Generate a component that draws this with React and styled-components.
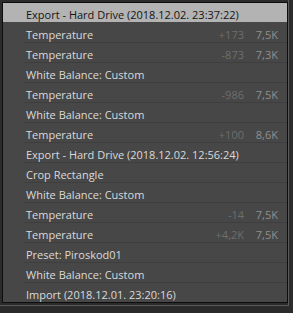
import styled, { createGlobalStyle } from "styled-components"

const Global = createGlobalStyle`
  html, body {
    margin: 0;
    padding: 0;
    background: #2b2b2b;
  }
`

const Frame = styled.div`
  width: 286px;
  height: 303px;
  padding: 2px 0 0 2px;
  border-right: 1px solid #5a5a5a;
  border-bottom: 1px solid #5a5a5a;
`

const Panel = styled.div`
  width: 284px;
  border: 1px solid #0d0d0d;
  background: #474747;
  font-family: "Open Sans", "Noto Sans", sans-serif;
  font-size: 11px;
`

const Row = styled.div`
  display: flex;
  align-items: center;
  height: 19px;
  box-sizing: border-box;
  padding: 4px 9px 0 23px;
  background: ${p => (p.$active ? "#b3b3b3" : "transparent")};
  color: ${p => (p.$active ? "#141414" : "#dadada")};
`

const Sep = styled.div`
  height: 1px;
  margin-left: 20px;
  background: ${p => (p.$hidden ? "transparent" : "#3e3e3e")};
`

const Label = styled.span`
  flex: 1;
  white-space: nowrap;
`

const Delta = styled.span`
  color: #6e6e6e;
  width: 40px;
  text-align: right;
`

const Value = styled.span`
  color: #8f8f8f;
  width: 34px;
  text-align: right;
`

const steps = [
  { label: "Export - Hard Drive (2018.12.02. 23:37:22)", active: true },
  { label: "Temperature", delta: "+173", value: "7,5K" },
  { label: "Temperature", delta: "-873", value: "7,3K" },
  { label: "White Balance: Custom" },
  { label: "Temperature", delta: "-986", value: "7,5K" },
  { label: "White Balance: Custom" },
  { label: "Temperature", delta: "+100", value: "8,6K" },
  { label: "Export - Hard Drive (2018.12.02. 12:56:24)" },
  { label: "Crop Rectangle" },
  { label: "White Balance: Custom" },
  { label: "Temperature", delta: "-14", value: "7,5K" },
  { label: "Temperature", delta: "+4,2K", value: "7,5K" },
  { label: "Preset: Piroskod01" },
  { label: "White Balance: Custom" },
  { label: "Import (2018.12.01. 23:20:16)" },
]

export default function App() {
  return (
    <>
      <Global />
      <Frame>
        <Panel>
          {steps.map((s, i) => (
            <div key={i}>
              {i > 0 && <Sep $hidden={i === 1} />}
              <Row $active={s.active}>
                <Label>{s.label}</Label>
                {s.value && (
                  <>
                    <Delta>{s.delta}</Delta>
                    <Value>{s.value}</Value>
                  </>
                )}
              </Row>
            </div>
          ))}
        </Panel>
      </Frame>
    </>
  )
}
